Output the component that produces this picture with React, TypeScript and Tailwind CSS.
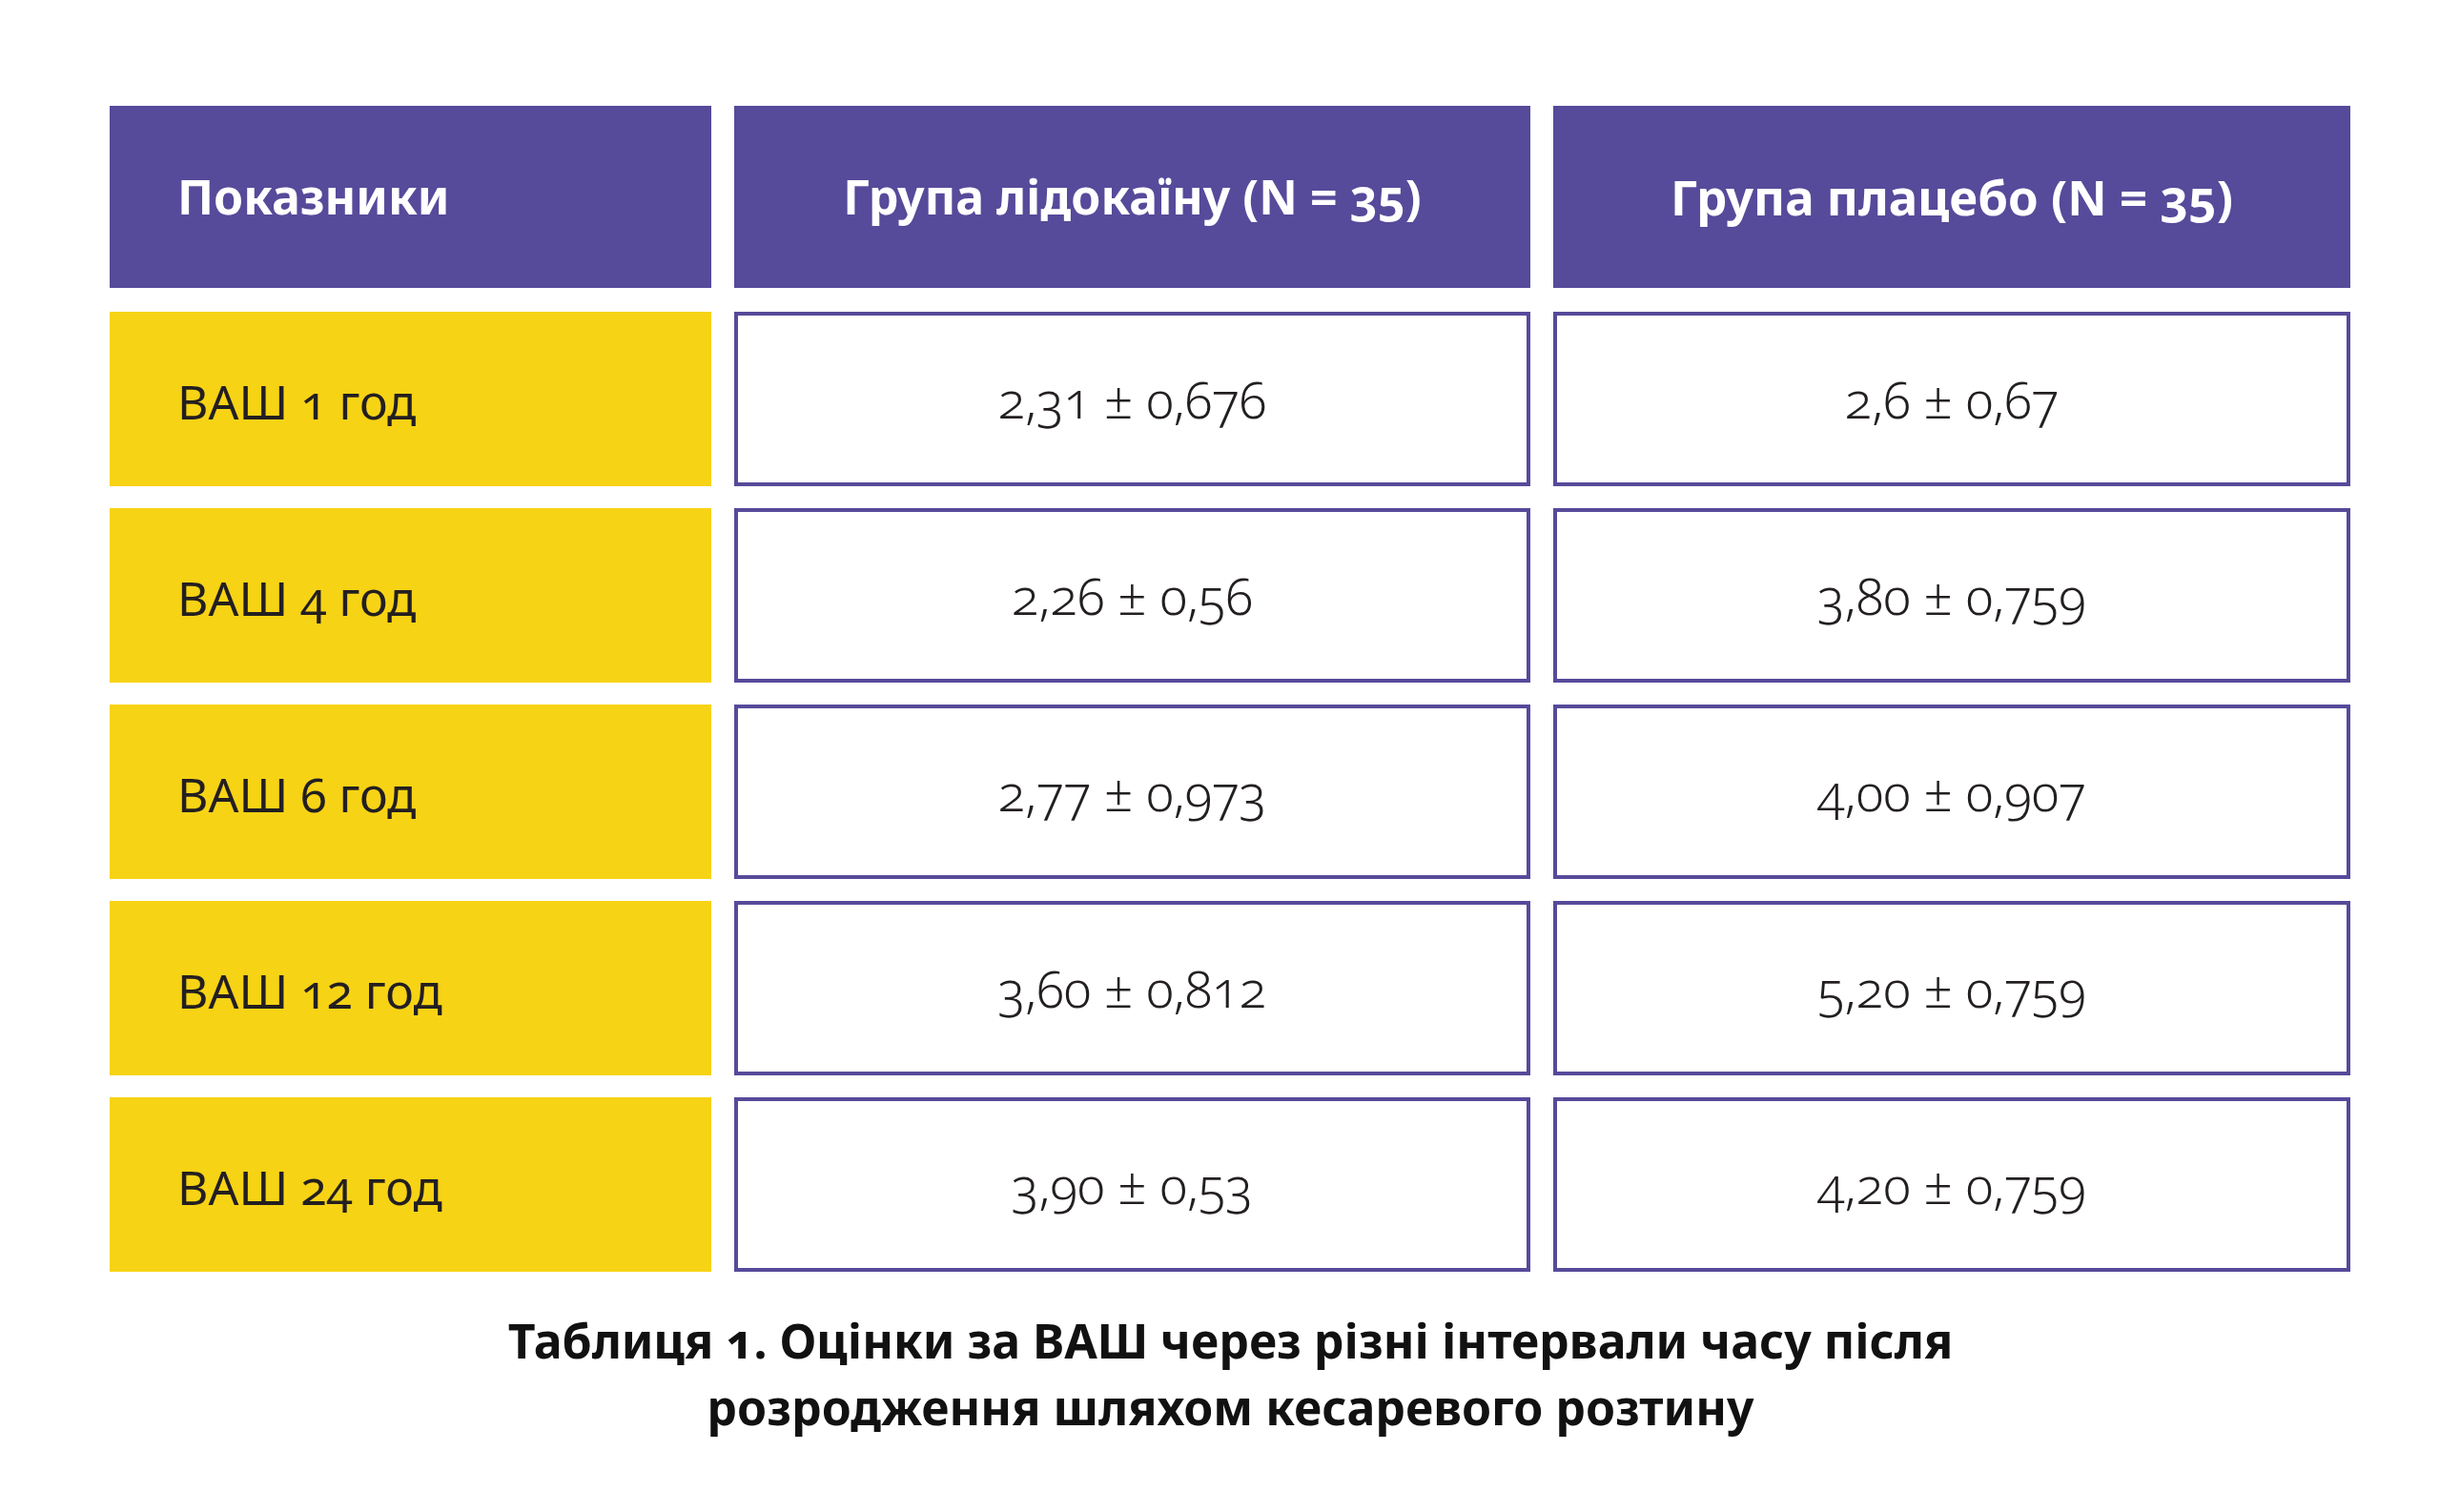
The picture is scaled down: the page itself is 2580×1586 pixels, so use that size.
import React from "react";

const rows: [string, string, string][] = [
  ["ВАШ 1 год", "2,31 ± 0,676", "2,6 ± 0,67"],
  ["ВАШ 4 год", "2,26 ± 0,56", "3,80 ± 0,759"],
  ["ВАШ 6 год", "2,77 ± 0,973", "4,00 ± 0,907"],
  ["ВАШ 12 год", "3,60 ± 0,812", "5,20 ± 0,759"],
  ["ВАШ 24 год", "3,90 ± 0,53", "4,20 ± 0,759"],
];

export default function App() {
  return (
    <div className="w-[2580px] h-[1586px] bg-white font-['Noto_Sans',sans-serif] oldstyle-nums text-[#231f20] overflow-hidden">
      <div className="pl-[115px] pt-[111px]">
        <div className="grid grid-cols-[631px_835px_836px] gap-x-[24px] gap-y-[23px] w-fit">
          <div className="h-[191px] mb-[2px] bg-[#564a9a] flex items-center pl-[71px] text-white font-bold text-[50px]">
            Показники
          </div>
          <div className="h-[191px] mb-[2px] bg-[#564a9a] flex items-center justify-center text-white font-bold text-[50px]">
            Група лідокаїну (N = 35)
          </div>
          <div className="h-[191px] mb-[2px] bg-[#564a9a] flex items-center justify-center text-white font-bold text-[51px]">
            Група плацебо (N = 35)
          </div>
          {rows.map((r, i) => (
            <React.Fragment key={i}>
              <div className="h-[183px] bg-[#f7d315] flex items-center pl-[71px] pt-[6px] text-[50px]">
                {r[0]}
              </div>
              <div className="h-[183px] bg-white border-[4px] border-[#564a9a] flex items-center justify-center font-light text-[53px]">
                {r[1]}
              </div>
              <div className="h-[183px] bg-white border-[4px] border-[#564a9a] flex items-center justify-center font-light text-[53px]">
                {r[2]}
              </div>
            </React.Fragment>
          ))}
        </div>
        <div className="w-[2351px] mt-[37px] text-center font-bold text-[50px] leading-[70px] text-[#111]">
          Таблиця 1. Оцінки за ВАШ через різні інтервали часу після
          <br />
          розродження шляхом кесаревого розтину
        </div>
      </div>
    </div>
  );
}
